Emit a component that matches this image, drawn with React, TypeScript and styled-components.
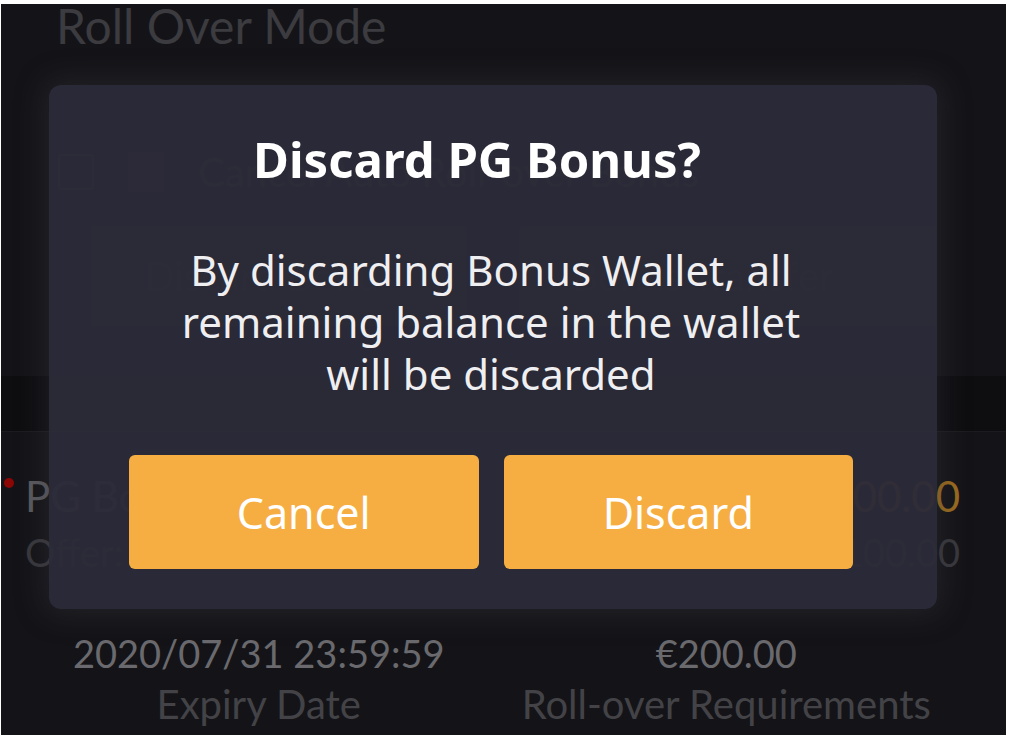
import React from "react";
import styled, { createGlobalStyle } from "styled-components";

const GlobalStyle = createGlobalStyle`
  html, body {
    margin: 0;
    padding: 0;
    background: #ffffff;
  }
  * {
    box-sizing: border-box;
  }
`;

const Frame = styled.div`
  position: relative;
  width: 1005px;
  height: 731px;
  margin: 4px 0 0 1px;
  background: #141418;
  font-family: Lato, "Liberation Sans", sans-serif;
`;

const Header = styled.div`
  padding: 0 0 0 55px;
  height: 58px;
  font-size: 48px;
  line-height: 44px;
  color: #3b3b40;
`;

const OptionRow = styled.div`
  display: flex;
  align-items: center;
  gap: 34px;
  margin-top: 86px;
  padding-left: 57px;
  height: 48px;
  font-size: 40px;
  color: #3b3b40;
`;

const CheckBox = styled.div`
  width: 36px;
  height: 36px;
  border: 2px solid #303038;
  border-radius: 4px;
`;

const ModeIcon = styled.div`
  width: 36px;
  height: 40px;
  border-radius: 4px;
  background: #3a2a30;
`;

const ModeSwitch = styled.div`
  display: grid;
  grid-template-columns: 376px 417px;
  gap: 52px;
  margin: 30px 0 0 90px;
  height: 100px;
`;

const ModeButton = styled.div`
  display: flex;
  align-items: center;
  padding-left: 53px;
  background: #1e1e24;
  font-size: 40px;
  color: #3b3b40;
`;

const Band = styled.div`
  margin-top: 50px;
  height: 56px;
  background: #0e0e11;
  border-bottom: 1px solid #1c1c20;
`;

const BonusItem = styled.div`
  position: relative;
  display: flex;
  justify-content: space-between;
  padding: 36px 46px 0 24px;
`;

const RedDot = styled.span`
  position: absolute;
  left: 3px;
  top: 46px;
  width: 10px;
  height: 10px;
  border-radius: 50%;
  background: #8c0606;
`;

const Column = styled.div<{ $align: "left" | "right" }>`
  display: flex;
  flex-direction: column;
  align-items: ${(p) => (p.$align === "left" ? "flex-start" : "flex-end")};
`;

const ItemTitle = styled.div<{ $accent?: boolean }>`
  font-size: 42px;
  line-height: 56px;
  color: ${(p) => (p.$accent ? "#9c6b1e" : "#5a5a5f")};
`;

const ItemSub = styled.div`
  font-size: 38px;
  line-height: 56px;
  color: #38383d;
`;

const Stats = styled.div`
  display: grid;
  grid-template-columns: 1fr 1fr;
  padding: 48px 46px 0 24px;
`;

const Stat = styled.div`
  display: flex;
  flex-direction: column;
  align-items: center;
`;

const StatValue = styled.div`
  font-size: 38px;
  line-height: 50px;
  color: #6a6a6e;
`;

const StatLabel = styled.div`
  font-size: 40px;
  line-height: 52px;
  color: #434347;
`;

const Overlay = styled.div`
  position: absolute;
  inset: 0;
  display: flex;
  align-items: flex-start;
  padding: 81px 0 0 48px;
`;

const Dialog = styled.div`
  width: 888px;
  height: 524px;
  border-radius: 12px;
  background: rgba(44, 43, 56, 0.96);
  box-shadow: 0 0 28px 6px rgba(58, 58, 66, 0.35);
  display: flex;
  flex-direction: column;
  align-items: center;
  padding: 44px 84px 40px 80px;
  font-family: "Noto Sans", "Open Sans", sans-serif;
  color: #ffffff;
`;

const Title = styled.h2`
  margin: 0 28px 0 0;
  font-size: 49px;
  line-height: 60px;
  font-weight: 700;
`;

const Message = styled.p`
  margin: 55px 0 0;
  text-align: center;
  font-size: 42px;
  line-height: 52px;
  color: #efeff1;
`;

const Actions = styled.div`
  margin-top: auto;
  width: 100%;
  display: grid;
  grid-template-columns: 1fr 1fr;
  gap: 25px;
`;

const ActionButton = styled.button`
  height: 114px;
  border: none;
  border-radius: 6px;
  background: #f6ae42;
  color: #ffffff;
  font-family: inherit;
  font-size: 43px;
  cursor: pointer;
`;

export default function App() {
  return (
    <>
      <GlobalStyle />
      <Frame>
        <Header>Roll Over Mode</Header>
        <OptionRow>
          <CheckBox />
          <ModeIcon />
          <span>Cancel Auto Roll-over Bonus</span>
        </OptionRow>
        <ModeSwitch>
          <ModeButton>Discard Bonus</ModeButton>
          <ModeButton>Bonus Transfer</ModeButton>
        </ModeSwitch>
        <Band />
        <BonusItem>
          <RedDot />
          <Column $align="left">
            <ItemTitle>PG Bonus</ItemTitle>
            <ItemSub>Offer: 100%</ItemSub>
          </Column>
          <Column $align="right">
            <ItemTitle $accent>€200.00</ItemTitle>
            <ItemSub>€100.00</ItemSub>
          </Column>
        </BonusItem>
        <Stats>
          <Stat>
            <StatValue>2020/07/31 23:59:59</StatValue>
            <StatLabel>Expiry Date</StatLabel>
          </Stat>
          <Stat>
            <StatValue>€200.00</StatValue>
            <StatLabel>Roll-over Requirements</StatLabel>
          </Stat>
        </Stats>

        <Overlay>
          <Dialog>
            <Title>Discard PG Bonus?</Title>
            <Message>
              By discarding Bonus Wallet, all
              <br />
              remaining balance in the wallet
              <br />
              will be discarded
            </Message>
            <Actions>
              <ActionButton>Cancel</ActionButton>
              <ActionButton>Discard</ActionButton>
            </Actions>
          </Dialog>
        </Overlay>
      </Frame>
    </>
  );
}
